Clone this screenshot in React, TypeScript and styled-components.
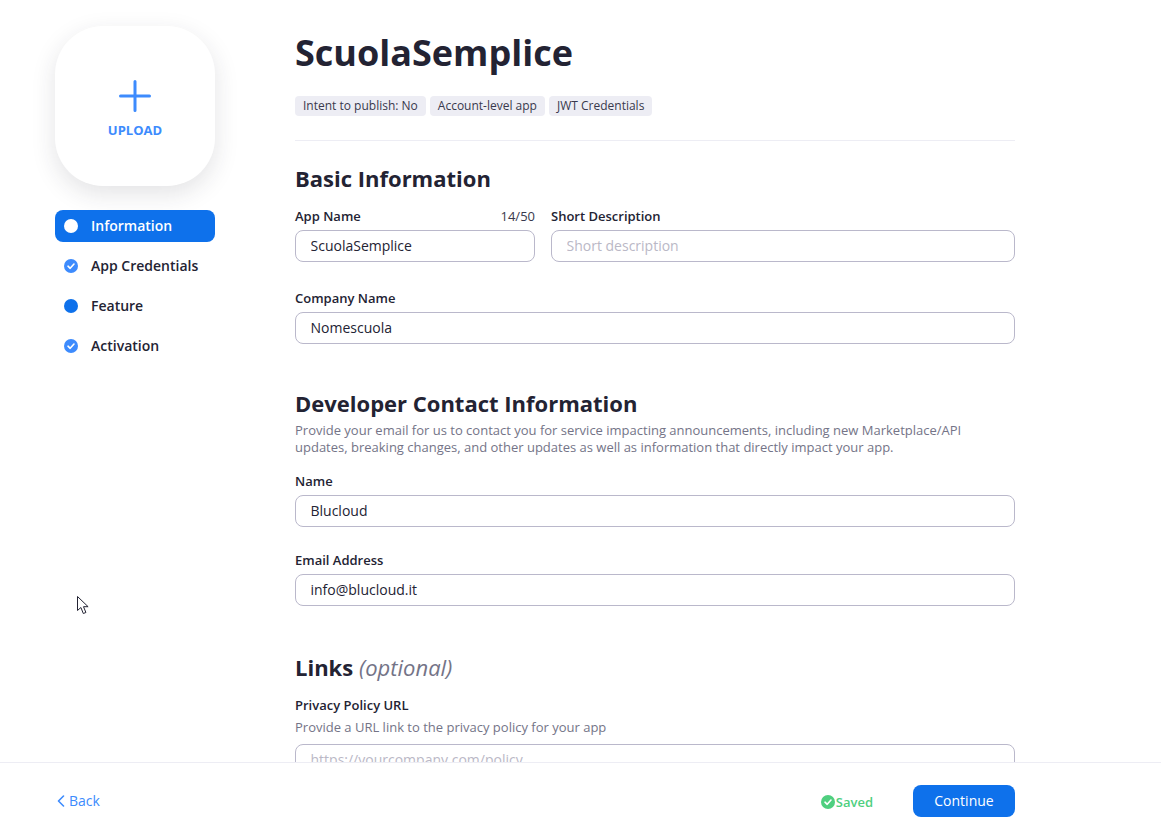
import React from 'react';
import styled, { createGlobalStyle } from 'styled-components';

const GlobalStyle = createGlobalStyle`
  html, body {
    margin: 0;
    height: 100%;
    background: #fff;
    overflow: hidden;
  }
  body {
    font-family: 'Open Sans', 'Liberation Sans', sans-serif;
    color: #232333;
  }
`;

const Page = styled.div`
  position: relative;
  display: flex;
  flex-direction: column;
  height: 100vh;
`;

const Body = styled.div`
  flex: 1;
  min-height: 0;
  display: flex;
  overflow: hidden;
  padding-left: 55px;
`;

const Sidebar = styled.aside`
  width: 160px;
  flex: none;
  padding-top: 26px;
  margin-right: 80px;
`;

const Upload = styled.div`
  width: 160px;
  height: 160px;
  border-radius: 48px;
  background: #fff;
  box-shadow: 0 8px 24px rgba(35, 35, 51, 0.13);
  display: flex;
  flex-direction: column;
  align-items: center;
  padding-top: 54px;
  box-sizing: border-box;
  margin-bottom: 24px;
`;

const UploadLabel = styled.span`
  font-size: 13px;
  font-weight: 700;
  line-height: 16px;
  color: #3d8bfd;
  margin-top: 10px;
`;

const Nav = styled.nav`
  display: flex;
  flex-direction: column;
  gap: 8px;
`;

const NavItem = styled.div<{ $active?: boolean }>`
  display: flex;
  align-items: center;
  gap: 13px;
  height: 32px;
  box-sizing: border-box;
  padding: 0 0 0 9px;
  border-radius: 8px;
  font-size: 14px;
  font-weight: 600;
  background: ${p => (p.$active ? '#0e71eb' : 'transparent')};
  color: ${p => (p.$active ? '#fff' : '#232333')};
`;

const NavText = styled.span`
  margin-top: -2px;
`;

const Dot = styled.span<{ $color: string }>`
  width: 14px;
  height: 14px;
  border-radius: 50%;
  background: ${p => p.$color};
  flex: none;
  display: flex;
  align-items: center;
  justify-content: center;
`;

const Main = styled.main`
  width: 720px;
  flex: none;
`;

const Title = styled.h1`
  margin: 30px 0 0;
  font-size: 36px;
  line-height: 46px;
  font-weight: 700;
  color: #232333;
`;

const Tags = styled.div`
  display: flex;
  gap: 4px;
  margin-top: 20px;
  padding-bottom: 24px;
  border-bottom: 1px solid #ededf4;
`;

const Tag = styled.span`
  height: 20px;
  line-height: 20px;
  padding: 0 8px;
  border-radius: 4px;
  background: #ededf4;
  font-size: 12px;
  color: #39394d;
`;

const SectionTitle = styled.h2<{ $top: number }>`
  margin: ${p => p.$top}px 0 0;
  font-size: 22px;
  line-height: 30px;
  font-weight: 700;
  color: #232333;
`;

const Optional = styled.em`
  font-weight: 400;
  color: #747487;
`;

const Hint = styled.p`
  margin: 0;
  font-size: 13px;
  line-height: 17px;
  color: #747487;
`;

const ContactHint = styled(Hint)`
  margin-top: 4px;
`;

const Row = styled.div`
  display: flex;
  gap: 16px;
  margin-top: 14px;
`;

const Field = styled.div<{ $width?: number; $top?: number }>`
  width: ${p => (p.$width ? `${p.$width}px` : '100%')};
  margin-top: ${p => p.$top ?? 0}px;
`;

const LabelRow = styled.div`
  display: flex;
  justify-content: space-between;
  height: 18px;
  margin-bottom: 5px;
`;

const Label = styled.label`
  font-size: 13px;
  line-height: 18px;
  font-weight: 600;
  color: #232333;
`;

const Counter = styled.span`
  font-size: 13px;
  line-height: 18px;
  color: #39394d;
`;

const Input = styled.input`
  display: block;
  width: 100%;
  height: 32px;
  box-sizing: border-box;
  padding: 0 15px 2px 14.5px;
  border: 1px solid #bab8cb;
  border-radius: 8px;
  outline: none;
  background: #fff;
  font-family: inherit;
  font-size: 14px;
  color: #232333;

  &::placeholder {
    color: #bab8c6;
    opacity: 1;
  }
`;

const PolicyHint = styled(Hint)`
  margin-bottom: 8px;
`;

const Footer = styled.footer`
  flex: none;
  height: 64px;
  box-sizing: border-box;
  border-top: 1px solid #ededf4;
  display: flex;
  align-items: center;
  padding: 12px 0 0 57px;
`;

const BackLink = styled.a`
  display: flex;
  align-items: center;
  gap: 4px;
  font-size: 14px;
  color: #3d8bfd;
`;

const FooterRight = styled.div`
  margin-left: auto;
  margin-right: 146px;
  display: flex;
  align-items: center;
`;

const Saved = styled.span`
  display: flex;
  align-items: center;
  gap: 1px;
  font-size: 13px;
  font-weight: 600;
  color: #4fcf7f;
  margin-right: 40px;
  padding-top: 2px;
`;

const ContinueButton = styled.button`
  width: 102px;
  height: 32px;
  border: none;
  border-radius: 8px;
  background: #0e71eb;
  color: #fff;
  font-family: inherit;
  font-size: 14px;
  font-weight: 500;
`;

const Cursor = styled.svg`
  position: absolute;
  left: 77px;
  top: 596px;
`;

const Check = ({ color }: { color: string }) => (
  <svg width="10" height="10" viewBox="0 0 10 10" fill="none">
    <path d="M2 5.2 4.2 7.3 8 3" stroke={color} strokeWidth="1.6" strokeLinecap="round" strokeLinejoin="round" />
  </svg>
);

const App = () => (
  <Page>
    <GlobalStyle />
    <Body>
      <Sidebar>
        <Upload>
          <svg width="32" height="32" viewBox="0 0 32 32" fill="none">
            <path d="M16 1.5v29M1.5 16h29" stroke="#3d8bfd" strokeWidth="3" strokeLinecap="round" />
          </svg>
          <UploadLabel>UPLOAD</UploadLabel>
        </Upload>
        <Nav>
          <NavItem $active>
            <Dot $color="#fff" />
            <NavText>Information</NavText>
          </NavItem>
          <NavItem>
            <Dot $color="#3d8bfd">
              <Check color="#fff" />
            </Dot>
            <NavText>App Credentials</NavText>
          </NavItem>
          <NavItem>
            <Dot $color="#0e71eb" />
            <NavText>Feature</NavText>
          </NavItem>
          <NavItem>
            <Dot $color="#3d8bfd">
              <Check color="#fff" />
            </Dot>
            <NavText>Activation</NavText>
          </NavItem>
        </Nav>
      </Sidebar>
      <Main>
        <Title>ScuolaSemplice</Title>
        <Tags>
          <Tag>Intent to publish: No</Tag>
          <Tag>Account-level app</Tag>
          <Tag>JWT Credentials</Tag>
        </Tags>

        <SectionTitle $top={22}>Basic Information</SectionTitle>
        <Row>
          <Field $width={240}>
            <LabelRow>
              <Label>App Name</Label>
              <Counter>14/50</Counter>
            </LabelRow>
            <Input readOnly value="ScuolaSemplice" />
          </Field>
          <Field $width={464}>
            <LabelRow>
              <Label>Short Description</Label>
            </LabelRow>
            <Input readOnly placeholder="Short description" />
          </Field>
        </Row>
        <Field $top={27}>
          <LabelRow>
            <Label>Company Name</Label>
          </LabelRow>
          <Input readOnly value="Nomescuola" />
        </Field>

        <SectionTitle $top={44}>Developer Contact Information</SectionTitle>
        <ContactHint>
          Provide your email for us to contact you for service impacting announcements, including new Marketplace/API
          updates, breaking changes, and other updates as well as information that directly impact your app.
        </ContactHint>
        <Field $top={16}>
          <LabelRow>
            <Label>Name</Label>
          </LabelRow>
          <Input readOnly value="Blucloud" />
        </Field>
        <Field $top={24}>
          <LabelRow>
            <Label>Email Address</Label>
          </LabelRow>
          <Input readOnly value="info@blucloud.it" />
        </Field>

        <SectionTitle $top={46}>
          Links <Optional>(optional)</Optional>
        </SectionTitle>
        <Field $top={14}>
          <LabelRow>
            <Label>Privacy Policy URL</Label>
          </LabelRow>
          <PolicyHint>Provide a URL link to the privacy policy for your app</PolicyHint>
          <Input readOnly placeholder="https://yourcompany.com/policy" />
        </Field>
      </Main>
    </Body>
    <Footer>
      <BackLink>
        <svg width="8" height="12" viewBox="0 0 8 12" fill="none">
          <path d="M6.5 1 1.5 6l5 5" stroke="#3d8bfd" strokeWidth="1.6" strokeLinecap="round" strokeLinejoin="round" />
        </svg>
        Back
      </BackLink>
      <FooterRight>
        <Saved>
          <Dot $color="#4fcf7f">
            <Check color="#fff" />
          </Dot>
          Saved
        </Saved>
        <ContinueButton>Continue</ContinueButton>
      </FooterRight>
    </Footer>
    <Cursor width="13" height="20" viewBox="0 0 13 20" fill="none">
      <path
        d="M.5.5v14l3.4-3 2.4 6 2.6-1-2.4-5.8h4.6z"
        fill="#fff"
        stroke="#232333"
        strokeWidth="1"
        strokeLinejoin="miter"
      />
    </Cursor>
  </Page>
);

export default App;
